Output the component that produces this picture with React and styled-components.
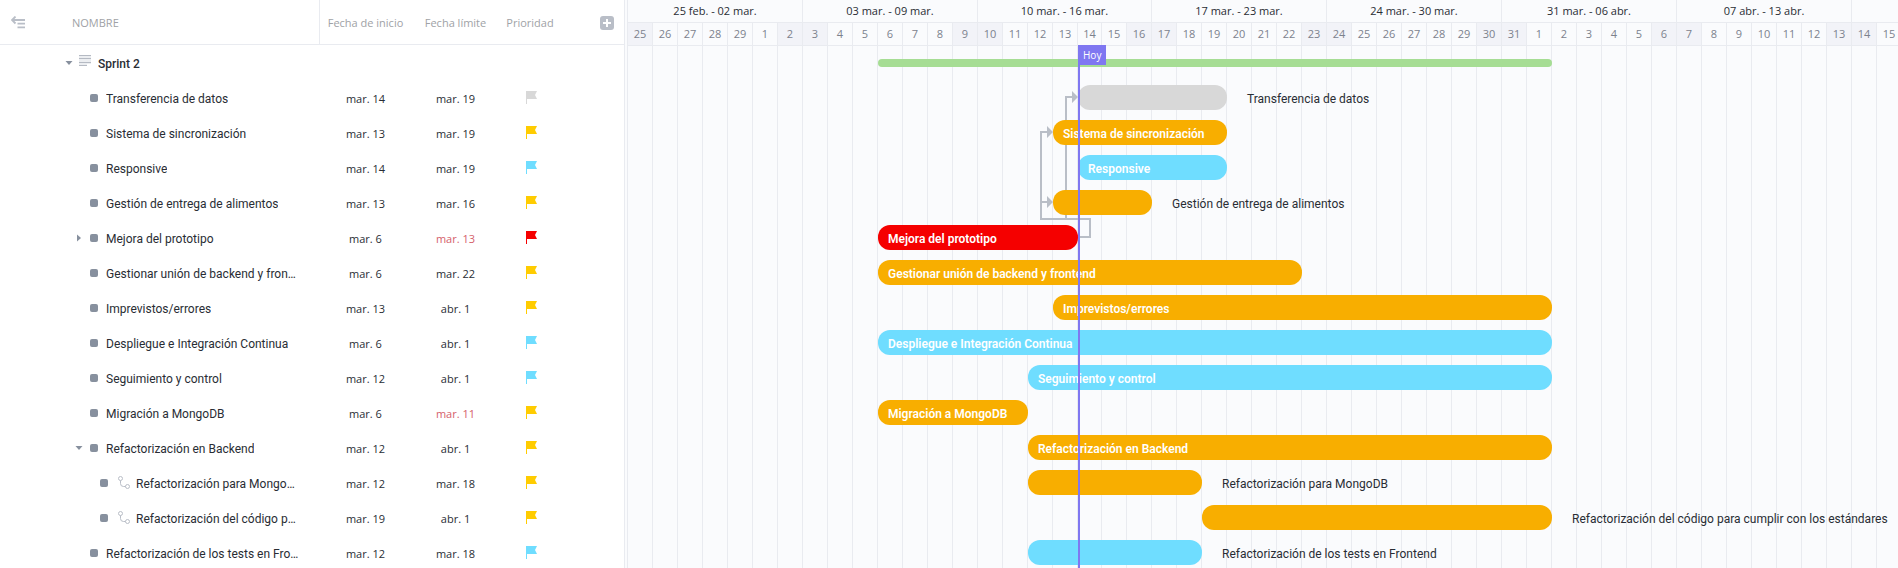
import React from "react";
import styled, { createGlobalStyle, css } from "styled-components";

const GlobalStyle = createGlobalStyle`
  *, *::before, *::after { box-sizing: border-box; }
  body {
    margin: 0;
    background: #fff;
    color: #292d34;
    font-family: "Open Sans", "Noto Sans", sans-serif;
    font-size: 12px;
    overflow: hidden;
  }
  button {
    margin: 0;
    padding: 0;
    border: 0;
    background: none;
    color: inherit;
    font: inherit;
    cursor: pointer;
  }
  svg { display: block; }
`;

const LINE = "#e9ebf0";
const YELLOW = "#f8ae00";
const BLUE = "#6fddff";
const RED = "#f50000";
const GREY = "#d8d8d8";
const FLAG = { [YELLOW]: "#ffcc00", [BLUE]: BLUE, [RED]: RED, [GREY]: GREY };
const NAME_FONT = `Roboto, "Open Sans", sans-serif`;

const TODAY = 18;

/* start and end are day indexes from 25 feb.; end is exclusive */
const TASKS = [
  { name: "Transferencia de datos", from: "mar. 14", to: "mar. 19", color: GREY, start: 18, end: 24, outside: true },
  { name: "Sistema de sincronización", from: "mar. 13", to: "mar. 19", color: YELLOW, start: 17, end: 24 },
  { name: "Responsive", from: "mar. 14", to: "mar. 19", color: BLUE, start: 18, end: 24 },
  { name: "Gestión de entrega de alimentos", from: "mar. 13", to: "mar. 16", color: YELLOW, start: 17, end: 21, outside: true },
  { name: "Mejora del prototipo", from: "mar. 6", to: "mar. 13", late: true, color: RED, start: 10, end: 18, toggle: "closed" },
  { name: "Gestionar unión de backend y frontend", from: "mar. 6", to: "mar. 22", color: YELLOW, start: 10, end: 27 },
  { name: "Imprevistos/errores", from: "mar. 13", to: "abr. 1", color: YELLOW, start: 17, end: 37 },
  { name: "Despliegue e Integración Continua", from: "mar. 6", to: "abr. 1", color: BLUE, start: 10, end: 37 },
  { name: "Seguimiento y control", from: "mar. 12", to: "abr. 1", color: BLUE, start: 16, end: 37 },
  { name: "Migración a MongoDB", from: "mar. 6", to: "mar. 11", late: true, color: YELLOW, start: 10, end: 16 },
  { name: "Refactorización en Backend", from: "mar. 12", to: "abr. 1", color: YELLOW, start: 16, end: 37, toggle: "open" },
  { name: "Refactorización para MongoDB", from: "mar. 12", to: "mar. 18", color: YELLOW, start: 16, end: 23, outside: true, child: true },
  { name: "Refactorización del código para cumplir con los estándares", from: "mar. 19", to: "abr. 1", color: YELLOW, start: 23, end: 37, outside: true, child: true },
  { name: "Refactorización de los tests en Frontend", from: "mar. 12", to: "mar. 18", color: BLUE, start: 16, end: 23, outside: true },
];

const WEEKS = [
  "25 feb. - 02 mar.",
  "03 mar. - 09 mar.",
  "10 mar. - 16 mar.",
  "17 mar. - 23 mar.",
  "24 mar. - 30 mar.",
  "31 mar. - 06 abr.",
  "07 abr. - 13 abr.",
  "",
];

const range = (a, b) => Array.from({ length: b - a + 1 }, (_, i) => a + i);
const DAYS = [...range(25, 29), ...range(1, 31), ...range(1, 15)];
const isWeekend = (i) => i % 7 === 0 || i % 7 === 6;

const Page = styled.main`
  display: flex;
  height: 100vh;
  overflow: hidden;
`;

/* ---------- task list ---------- */

const ListPane = styled.section`
  flex: none;
  border-right: 1px solid ${LINE};
`;

const TaskTable = styled.table`
  table-layout: fixed;
  width: 624px;
  border-collapse: separate;
  border-spacing: 0;
`;

const HeadCell = styled.th`
  height: 45px;
  padding: 0;
  border-bottom: 1px solid ${LINE};
  color: #a0a2a6;
  font-size: 11px;
  font-weight: 400;
  text-align: center;
`;

const NameHeadCell = styled(HeadCell)`
  border-right: 1px solid ${LINE};
  font-weight: 500;
  text-align: left;
`;

const AddHeadCell = styled(HeadCell)`
  padding: 4px 10px 0 0;
  text-align: right;
`;

const NameHead = styled.div`
  display: flex;
  align-items: center;
  gap: 46px;
  padding-left: 11px;
`;

const IconButton = styled.button`
  display: inline-flex;
  color: #b9bec7;
`;

const Cell = styled.td`
  height: 35px;
  padding: 0;
  font-size: 11px;
  text-align: center;
`;

const DateCell = styled(Cell)`
  padding-top: 1px;
  color: ${(p) => (p.$late ? "#d5606a" : "inherit")};
`;

const NameCell = styled(Cell)`
  font-family: ${NAME_FONT};
  font-size: 12px;
  text-align: left;
`;

const NameLine = styled.div`
  display: flex;
  align-items: center;
  padding: 0 21px 0 ${(p) => (p.$child ? 84 : 74)}px;
`;

const Toggle = styled.span`
  display: flex;
  justify-content: center;
  flex: none;
  width: 10px;
  margin-right: 6px;
  color: #87909e;
`;

const Status = styled.button`
  flex: none;
  width: 8px;
  height: 8px;
  margin-right: 8px;
  border-radius: 2px;
  background: #87909e;
`;

const Branch = styled.span`
  flex: none;
  margin: 0 6px 0 2px;
`;

const TaskName = styled.span`
  min-width: 0;
  padding-top: 2px;
  overflow: hidden;
  line-height: 18px;
  text-overflow: ellipsis;
  white-space: nowrap;
`;

const SprintLine = styled.div`
  display: flex;
  align-items: center;
  padding-left: 64px;
`;

const SprintToggle = styled(Toggle)`
  margin-right: 5px;
`;

const SprintName = styled(TaskName)`
  margin-left: 7px;
  font-weight: 500;
`;

const FlagBox = styled.span`
  display: flex;
  padding-left: 26px;
`;

/* ---------- timeline ---------- */

const Divider = styled.div`
  flex: none;
  width: 3px;
  border-right: 1px solid ${LINE};
  background: #fafbfd;
`;

const Timeline = styled.section`
  flex: 1;
  min-width: 0;
  overflow: hidden;
  background: #fafbfd;
`;

const columns = css`
  display: grid;
  grid-template-columns: repeat(${TODAY}, 25px) 24px repeat(32, 25px);
`;

const WeekRow = styled.div`
  ${columns}
  height: 23px;
`;

const Week = styled.div`
  grid-column: span ${(p) => p.$span};
  border-right: 1px solid ${LINE};
  border-bottom: 1px solid ${LINE};
  font-size: 11px;
  line-height: 22px;
  text-align: center;
`;

const DayRow = styled.div`
  ${columns}
  height: 22px;
`;

const Day = styled.div`
  border-right: 1px solid ${LINE};
  border-bottom: 1px solid ${LINE};
  background: ${(p) => (p.$weekend ? "#f2f3f8" : "transparent")};
  color: #7c828d;
  font-size: 11px;
  font-weight: 500;
  line-height: 22px;
  text-align: center;
`;

const Board = styled.div`
  ${columns}
  grid-template-rows: repeat(${TASKS.length + 1}, 35px);
  align-items: center;
  font-family: ${NAME_FONT};
`;

const ColumnLine = styled.div`
  grid-row: 1 / -1;
  grid-column: ${(p) => p.$col};
  align-self: stretch;
  border-right: 1px solid ${LINE};
`;

const Links = styled.svg`
  grid-row: 1 / -1;
  grid-column: 1 / 22;
  align-self: start;
`;

const SprintBar = styled.div`
  grid-row: 1;
  grid-column: 11 / 38;
  height: 8px;
  border-radius: 4px;
  background: #a6dd94;
`;

const Bar = styled.div`
  grid-row: ${(p) => p.$row};
  grid-column: ${(p) => p.$start + 1} / ${(p) => p.$end + 1};
  height: 25px;
  padding: 0 10px;
  border-radius: 12px;
  background: ${(p) => p.$color};
  color: #fff;
  font-weight: 600;
  line-height: 28px;
  white-space: nowrap;
`;

const BarLabel = styled.span`
  grid-row: ${(p) => p.$row};
  grid-column: ${(p) => p.$end + 1} / -1;
  height: 25px;
  padding-left: 20px;
  line-height: 28px;
  white-space: nowrap;
`;

const TodayLine = styled.div`
  grid-row: 1 / -1;
  grid-column: ${TODAY + 1};
  align-self: stretch;
  width: 2px;
  background: #7f77f1;
`;

const TodayBadge = styled.span`
  grid-row: 1;
  grid-column: ${TODAY + 1} / span 2;
  place-self: start;
  padding: 0 5px;
  background: #7f77f1;
  color: #fff;
  font-family: "Open Sans", sans-serif;
  font-size: 10px;
  line-height: 20px;
`;

/* ---------- icons ---------- */

const CollapseIcon = () => (
  <svg width="15" height="13" viewBox="0 0 15 13" fill="none" stroke="currentColor" strokeWidth="1.8">
    <path d="M4.5 0.5 L1 4 L4.5 7.5 M1 4 H14 M6.5 7.7 H14 M6.5 11.3 H14" />
  </svg>
);

const PlusIcon = () => (
  <svg width="14" height="14" viewBox="0 0 14 14">
    <rect width="14" height="14" rx="3" fill="#b9bec7" />
    <path d="M7 3 V11 M3 7 H11" stroke="#fff" strokeWidth="2" />
  </svg>
);

const CaretDown = () => (
  <svg width="8" height="4" viewBox="0 0 8 4">
    <path d="M0.5 0 H7.5 L4 4 Z" fill="currentColor" />
  </svg>
);

const CaretRight = () => (
  <svg width="4" height="8" viewBox="0 0 4 8">
    <path d="M0 0.5 V7.5 L4 4 Z" fill="currentColor" />
  </svg>
);

const ListIcon = () => (
  <svg width="12" height="15" viewBox="0 0 12 15" stroke="#b5bac3" strokeWidth="1">
    <path d="M0 0 H12 V9 H8 V11 H0 Z" fill="#eceef1" stroke="none" />
    <path d="M0 0.5 H12 M0 3.5 H12 M0 7.5 H12 M0 10.5 H8" />
  </svg>
);

const BranchIcon = () => (
  <svg width="12" height="13" viewBox="0 0 12 13" fill="none" stroke="#b9bec7">
    <circle cx="2.5" cy="2.5" r="2" />
    <circle cx="9.5" cy="10.5" r="2" />
    <path d="M2.5 4.5 V7.5 Q2.5 10.5 5.5 10.5 H7.5" />
  </svg>
);

const FlagIcon = ({ color }) => (
  <svg width="12" height="14" viewBox="0 0 12 14">
    <path d="M0 0 H11 L9 4 L11 8 H1 V13 H0 Z" fill={color} />
  </svg>
);

const DependencyLinks = () => (
  <Links width="500" height="200" viewBox="0 0 500 200" fill="none" stroke="#b9bec7" strokeWidth="2" aria-hidden="true">
    <path d="M438 174 V52 H445" />
    <path d="M450 192 H462 V174 H413 V87 H420 M413 157 H420" />
    <path d="M444 46 L450 52 L444 58 Z M419 81 L425 87 L419 93 Z M419 151 L425 157 L419 163 Z" fill="#b9bec7" stroke="none" />
  </Links>
);

function TaskRow({ task }) {
  return (
    <tr>
      <NameCell>
        <NameLine $child={task.child}>
          {task.toggle ? (
            <Toggle as="button" aria-label="Subtareas" aria-expanded={task.toggle === "open"}>
              {task.toggle === "open" ? <CaretDown /> : <CaretRight />}
            </Toggle>
          ) : (
            <Toggle />
          )}
          <Status aria-label="Estado" />
          {task.child && (
            <Branch>
              <BranchIcon />
            </Branch>
          )}
          <TaskName>{task.name}</TaskName>
        </NameLine>
      </NameCell>
      <DateCell>{task.from}</DateCell>
      <DateCell $late={task.late}>{task.to}</DateCell>
      <Cell>
        <FlagBox>
          <FlagIcon color={FLAG[task.color]} />
        </FlagBox>
      </Cell>
      <Cell />
    </tr>
  );
}

function TaskList() {
  return (
    <ListPane>
      <TaskTable>
        <colgroup>
          <col style={{ width: 320 }} />
          <col style={{ width: 91 }} />
          <col style={{ width: 89 }} />
          <col style={{ width: 60 }} />
          <col />
        </colgroup>
        <thead>
          <tr>
            <NameHeadCell>
              <NameHead>
                <IconButton aria-label="Contraer lista">
                  <CollapseIcon />
                </IconButton>
                NOMBRE
              </NameHead>
            </NameHeadCell>
            <HeadCell>Fecha de inicio</HeadCell>
            <HeadCell>Fecha límite</HeadCell>
            <HeadCell>Prioridad</HeadCell>
            <AddHeadCell>
              <IconButton aria-label="Añadir columna">
                <PlusIcon />
              </IconButton>
            </AddHeadCell>
          </tr>
        </thead>
        <tbody>
          <tr>
            <NameCell colSpan={5}>
              <SprintLine>
                <SprintToggle as="button" aria-label="Contraer sprint" aria-expanded>
                  <CaretDown />
                </SprintToggle>
                <ListIcon />
                <SprintName>Sprint 2</SprintName>
              </SprintLine>
            </NameCell>
          </tr>
          {TASKS.map((task) => (
            <TaskRow key={task.name} task={task} />
          ))}
        </tbody>
      </TaskTable>
    </ListPane>
  );
}

function Gantt() {
  return (
    <Timeline>
      <WeekRow>
        {WEEKS.map((week, i) => (
          <Week key={i} $span={i === 7 ? 2 : 7}>
            {week}
          </Week>
        ))}
      </WeekRow>
      <DayRow>
        {DAYS.map((day, i) => (
          <Day key={i} $weekend={isWeekend(i)}>
            {day}
          </Day>
        ))}
      </DayRow>
      <Board>
        {DAYS.map((_, i) => (
          <ColumnLine key={i} $col={i + 1} />
        ))}
        <DependencyLinks />
        <SprintBar />
        {TASKS.map((task, i) => (
          <React.Fragment key={task.name}>
            <Bar $row={i + 2} $start={task.start} $end={task.end} $color={task.color}>
              {!task.outside && task.name}
            </Bar>
            {task.outside && (
              <BarLabel $row={i + 2} $end={task.end}>
                {task.name}
              </BarLabel>
            )}
          </React.Fragment>
        ))}
        <TodayLine />
        <TodayBadge>Hoy</TodayBadge>
      </Board>
    </Timeline>
  );
}

export default function App() {
  return (
    <>
      <GlobalStyle />
      <Page>
        <TaskList />
        <Divider />
        <Gantt />
      </Page>
    </>
  );
}
